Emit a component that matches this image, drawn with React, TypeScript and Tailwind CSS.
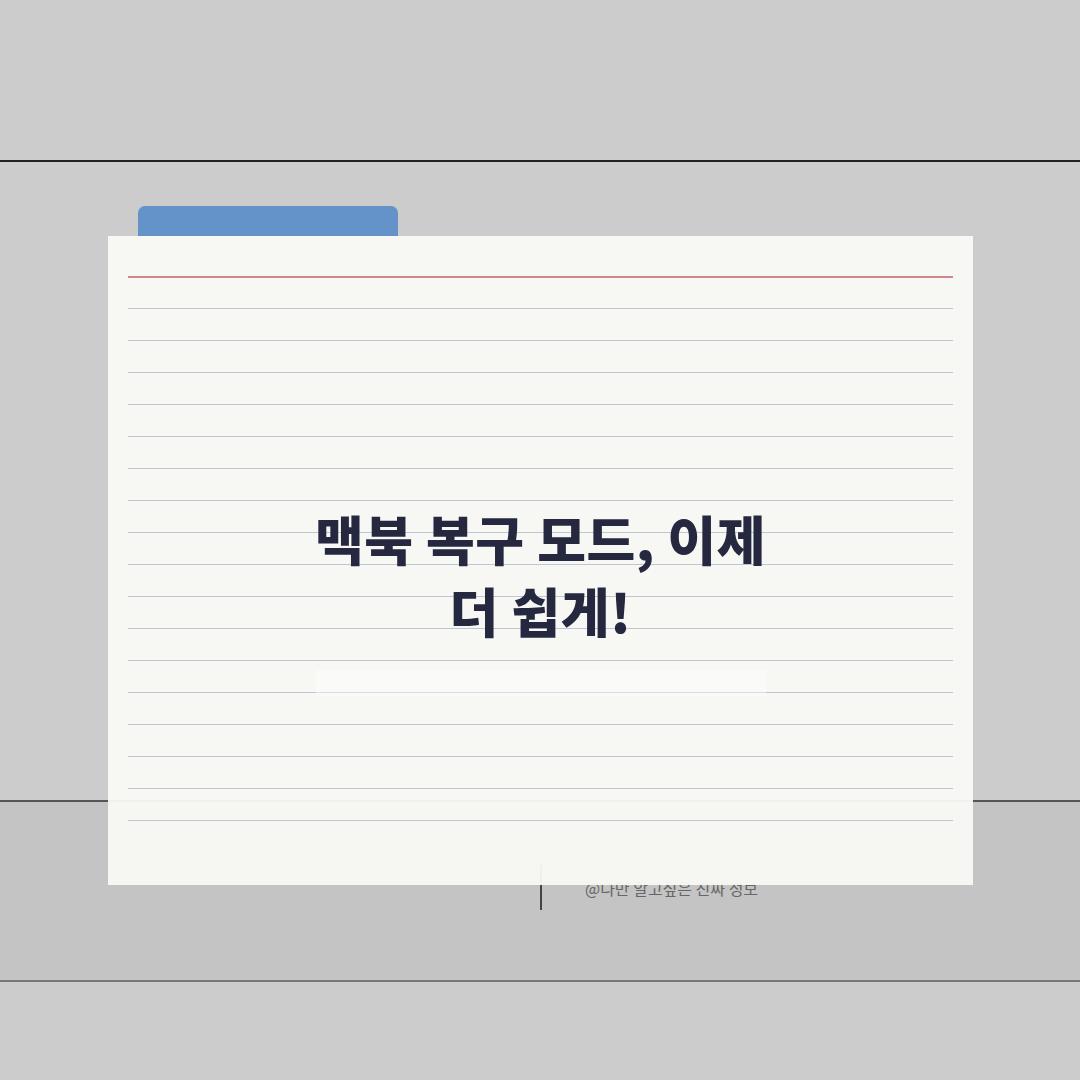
const ruledLines = Array.from({ length: 17 }, (_, i) => i);

function NoteCard() {
  return (
    <div className="relative z-10 ml-[108px] w-[865px]">
      {/* folder tab */}
      <div className="ml-[30px] h-[30px] w-[260px] rounded-t-[7px] bg-[#6393c8]" />
      <div className="relative h-[649px] bg-[#f9faf6]/95 px-[20px] pt-[40px]">
        <div className="h-[2px] bg-[#d08888]" />
        <div className="pt-[30px]">
          {ruledLines.map((i) => (
            <div key={i} className="h-[32px] border-t border-[#bcc6d4]" />
          ))}
        </div>
        <div className="absolute inset-x-0 top-[266px] flex flex-col items-center">
          <h1 className="text-center text-[53px] leading-[72px] font-black tracking-[0.5px] text-[#262840] [font-family:'Noto_Sans_CJK_KR','Noto_Sans',sans-serif]">
            맥북 복구 모드, 이제
            <br />
            더 쉽게!
          </h1>
          <div className="mt-[24px] h-[26px] w-[450px] bg-white/40" />
        </div>
      </div>
    </div>
  );
}

export default function App() {
  return (
    <div className="h-[1080px] w-[1080px] overflow-hidden bg-[#cccccc] [font-family:'Noto_Sans_CJK_KR','Noto_Sans',sans-serif]">
      <div className="h-[160px]" />
      <div className="h-[640px] border-t-2 border-[#222222] pt-[44px]">
        <NoteCard />
      </div>
      <div className="h-[182px] border-y-2 border-t-[#555555] border-b-[#777777] bg-[#c4c4c4] pt-[63px]">
        <div className="flex items-center pl-[540px]">
          <div className="h-[45px] w-[2px] bg-[#444444]" />
          <span className="ml-[43px] text-[16px] text-[#666666]">@나만 알고싶은 진짜 정보</span>
        </div>
      </div>
    </div>
  );
}
